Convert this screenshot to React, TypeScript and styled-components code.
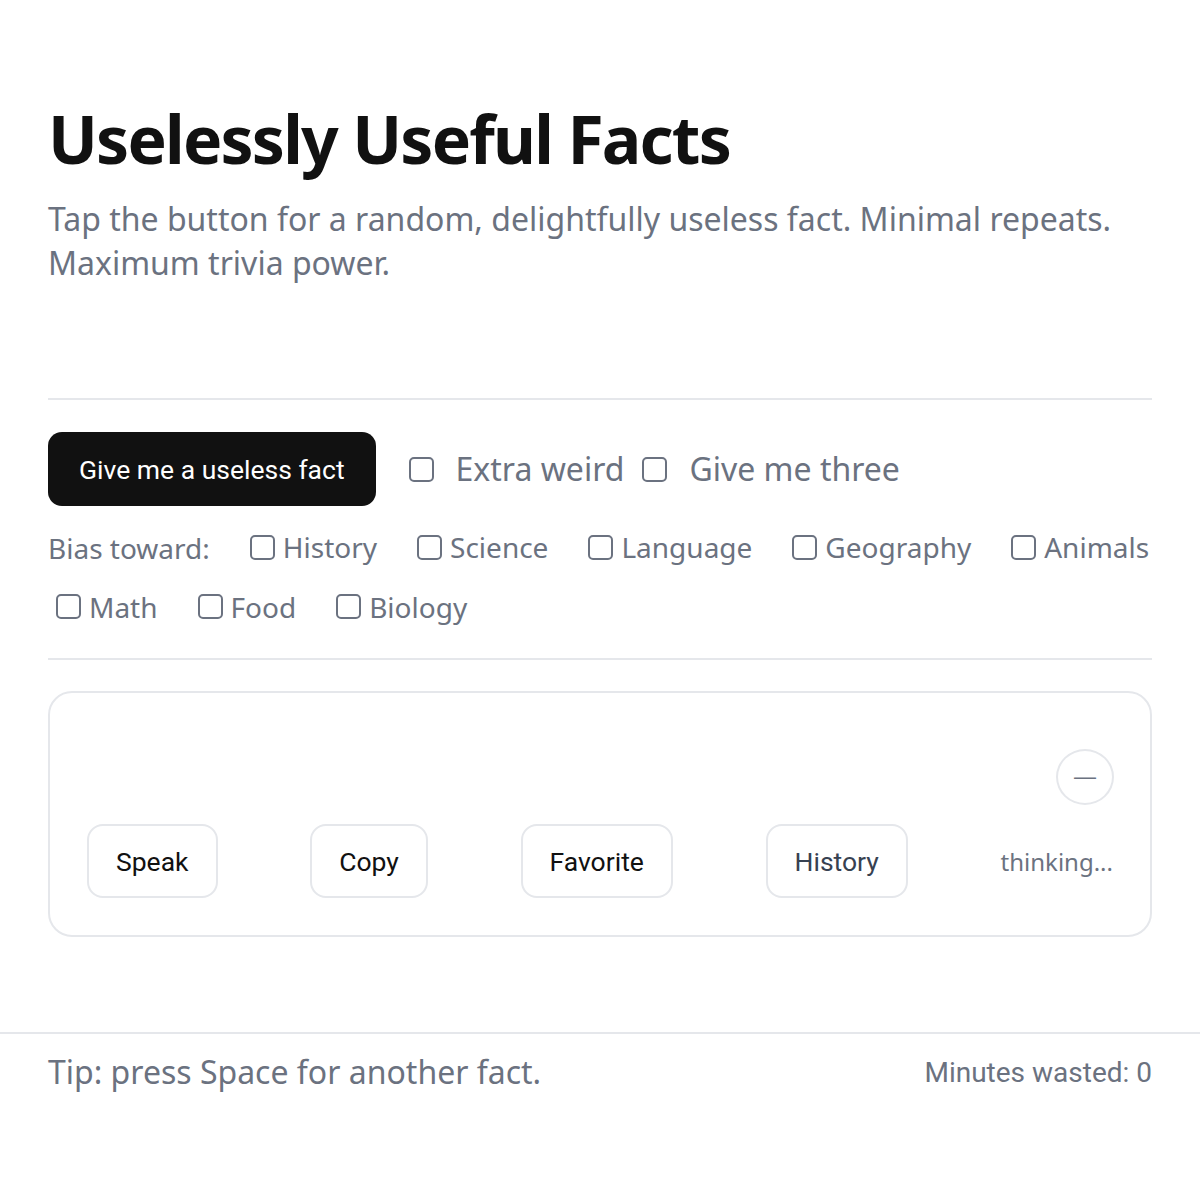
import React from "react";
import styled, { createGlobalStyle } from "styled-components";

const GlobalStyle = createGlobalStyle`
  * { box-sizing: border-box; }
  html, body { margin: 0; padding: 0; background: #fff; }
  body { font-family: "Noto Sans", "Open Sans", sans-serif; color: #111; }
`;

const Page = styled.div`
  width: 1200px;
  min-height: 1200px;
  display: flex;
  flex-direction: column;
`;

const Main = styled.main`
  padding: 100px 48px 0;
`;

const Title = styled.h1`
  margin: 0;
  font-size: 66px;
  line-height: 76px;
  font-weight: 700;
  letter-spacing: -1.8px;
  color: #111;
`;

const Subtitle = styled.p`
  margin: 21px 0 0;
  font-size: 32px;
  line-height: 44px;
  color: #6b7280;
`;

const Divider = styled.hr`
  border: 0;
  border-top: 2px solid #e5e7eb;
  margin: 0;
`;

const Controls = styled.section`
  margin-top: 113px;
`;

const TopRow = styled.div`
  display: flex;
  align-items: center;
  padding-top: 32px;
`;

const PrimaryButton = styled.button`
  font-family: Roboto, sans-serif;
  font-size: 26.5px;
  color: #fff;
  background: #111;
  border: 0;
  border-radius: 14px;
  height: 74px;
  padding: 0 31px;
  margin-right: 33px;
  cursor: pointer;
`;

const Option = styled.label<{ $gap: number }>`
  display: inline-flex;
  align-items: center;
  gap: ${(p) => p.$gap}px;
  color: #6b7280;
  cursor: pointer;
`;

const Box = styled.span<{ $size: number }>`
  display: inline-block;
  width: ${(p) => p.$size}px;
  height: ${(p) => p.$size}px;
  border: 2px solid #6b7280;
  border-radius: 5px;
  background: #fff;
  flex-shrink: 0;
`;

const BigLabel = styled.span`
  font-size: 32px;
  line-height: 44px;
  margin-right: 18px;
`;

const BiasRow = styled.div`
  display: flex;
  flex-wrap: wrap;
  align-items: center;
  column-gap: 32px;
  row-gap: 18px;
  margin-top: 21px;
  padding-bottom: 30px;
  font-size: 28px;
  line-height: 40px;
  color: #6b7280;
`;

const BiasItem = styled.div`
  padding-left: 8px;
`;

const BiasTitle = styled.span`
  color: #6b7280;
`;

const Card = styled.section`
  margin-top: 31px;
  border: 2px solid #e5e7eb;
  border-radius: 24px;
  padding: 36px 37px 37px;
`;

const FactRow = styled.div`
  display: flex;
  justify-content: flex-end;
  padding-top: 20px;
`;

const RoundButton = styled.button`
  width: 58px;
  height: 56px;
  border-radius: 50%;
  border: 2px solid #e5e7eb;
  background: #fff;
  color: #6b7280;
  font-size: 22px;
  display: flex;
  align-items: center;
  justify-content: center;
  padding: 0;
  margin-right: -1px;
`;

const Actions = styled.div`
  display: flex;
  align-items: center;
  justify-content: space-between;
  margin-top: 19px;
`;

const ActionButton = styled.button<{ $muted?: boolean }>`
  font-family: Roboto, sans-serif;
  font-size: 26.5px;
  color: ${(p) => (p.$muted ? "#374151" : "#111")};
  background: #fff;
  border: 2px solid #e5e7eb;
  border-radius: 16px;
  height: 74px;
  padding: 0 27px;
`;

const Status = styled.span`
  font-size: 24px;
  color: #6b7280;
`;

const Footer = styled.footer`
  margin-top: 95px;
  border-top: 2px solid #e5e7eb;
  padding: 16px 48px;
  display: flex;
  justify-content: space-between;
  align-items: center;
  color: #6b7280;
`;

const Tip = styled.span`
  font-size: 32px;
  line-height: 44px;
`;

const Counter = styled.span`
  font-family: Roboto, sans-serif;
  font-size: 28px;
`;

const topics = ["History", "Science", "Language", "Geography", "Animals", "Math", "Food", "Biology"];

export default function App() {
  return (
    <Page>
      <GlobalStyle />
      <Main>
        <Title>Uselessly Useful Facts</Title>
        <Subtitle>
          Tap the button for a random, delightfully useless fact. Minimal repeats.
          <br />
          Maximum trivia power.
        </Subtitle>

        <Controls>
          <Divider />
          <TopRow>
            <PrimaryButton>Give me a useless fact</PrimaryButton>
            <Option $gap={22}>
              <Box $size={25} />
              <BigLabel>Extra weird</BigLabel>
            </Option>
            <Option $gap={22}>
              <Box $size={25} />
              <BigLabel>Give me three</BigLabel>
            </Option>
          </TopRow>
          <BiasRow>
            <BiasTitle>Bias toward:</BiasTitle>
            {topics.map((t) => (
              <BiasItem key={t}>
                <Option $gap={8}>
                  <Box $size={25} />
                  <span>{t}</span>
                </Option>
              </BiasItem>
            ))}
          </BiasRow>
          <Divider />
        </Controls>

        <Card>
          <FactRow>
            <RoundButton aria-label="loading">—</RoundButton>
          </FactRow>
          <Actions>
            <ActionButton>Speak</ActionButton>
            <ActionButton>Copy</ActionButton>
            <ActionButton>Favorite</ActionButton>
            <ActionButton $muted>History</ActionButton>
            <Status>thinking...</Status>
          </Actions>
        </Card>
      </Main>

      <Footer>
        <Tip>Tip: press Space for another fact.</Tip>
        <Counter>Minutes wasted: 0</Counter>
      </Footer>
    </Page>
  );
}
